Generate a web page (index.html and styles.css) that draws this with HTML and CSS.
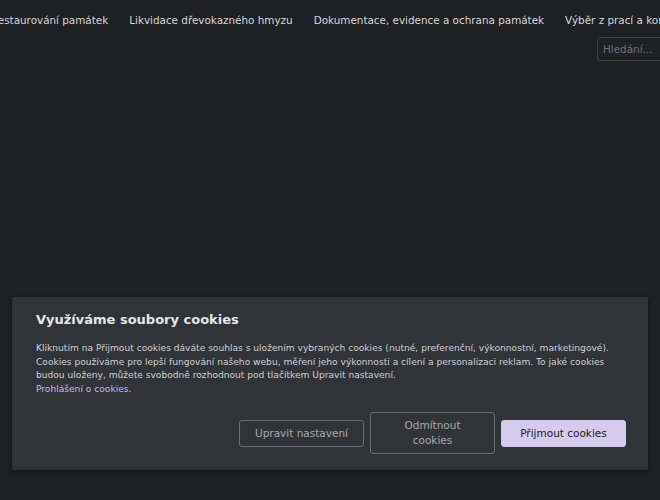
FILE: index.html
```html
<!DOCTYPE html>
<html lang="cs">
<head>
<meta charset="utf-8">
<link rel="stylesheet" href="styles.css">
</head>
<body>
<header class="top">
  <nav class="nav">
    <a class="nav-item">Restaurování památek</a>
    <a class="nav-item">Likvidace dřevokazného hmyzu</a>
    <a class="nav-item">Dokumentace, evidence a ochrana památek</a>
    <a class="nav-item">Výběr z prací a kontakty</a>
  </nav>
  <div class="search-row">
    <input class="search" type="text" placeholder="Hledání...">
  </div>
</header>
<div class="cookie">
  <h2 class="cookie-title">Využíváme soubory cookies</h2>
  <p class="cookie-text">Kliknutím na Přijmout cookies dáváte souhlas s uložením vybraných cookies (nutné, preferenční, výkonnostní, marketingové). Cookies používáme pro lepší fungování našeho webu, měření jeho výkonnosti a cílení a personalizaci reklam. To jaké cookies budou uloženy, můžete svobodně rozhodnout pod tlačítkem Upravit nastavení.<br><a class="cookie-link">Prohlášení o cookies.</a></p>
  <div class="cookie-actions">
    <button class="btn btn-outline">Upravit nastavení</button>
    <button class="btn btn-outline">Odmítnout cookies</button>
    <button class="btn btn-primary">Přijmout cookies</button>
  </div>
</div>
</body>
</html>
```
FILE: styles.css
```css
html, body {
  margin: 0;
  padding: 0;
  background: #1e2023;
  height: 100%;
  overflow: hidden;
  font-family: "DejaVu Sans", sans-serif;
}
.top {
  display: flex;
  flex-direction: column;
}
.nav {
  display: flex;
  gap: 21px;
  white-space: nowrap;
  margin-left: -9px;
  padding-top: 13px;
  font-size: 10.4px;
  line-height: 14px;
}
.nav-item {
  color: #d6d7d9;
}
.search-row {
  display: flex;
  justify-content: flex-end;
  margin-top: 10px;
  margin-right: -11px;
}
.search {
  width: 74px;
  height: 24px;
  box-sizing: border-box;
  background: #1e2023;
  border: 1px solid #3f4247;
  border-radius: 3px;
  padding: 0 5px;
  font-family: "DejaVu Sans", sans-serif;
  font-size: 10.4px;
  color: #d6d7d9;
}
.search::placeholder {
  color: #6f7277;
}
.cookie {
  position: absolute;
  left: 12px;
  right: 12px;
  top: 297px;
  height: 173px;
  box-sizing: border-box;
  background: #303338;
  border-radius: 2px;
  box-shadow: 0 2px 6px rgba(0,0,0,0.35);
  padding: 13px 22px 0 24px;
  color: #d6d7d9;
}
.cookie-title {
  margin: 0 0 12px;
  font-size: 13px;
  font-weight: bold;
  line-height: 20px;
  color: #e6e7e9;
}
.cookie-text {
  margin: 0;
  font-size: 9.1px;
  line-height: 13.5px;
  color: #d0d1d3;
}
.cookie-link {
  color: #c9bde6;
}
.cookie-actions {
  display: flex;
  justify-content: flex-end;
  align-items: center;
  gap: 6px;
  margin-top: 16px;
}
.btn {
  width: 125px;
  box-sizing: border-box;
  font-family: "DejaVu Sans", sans-serif;
  font-size: 10.5px;
  line-height: 15px;
  border-radius: 3px;
  padding: 5px 14px;
}
.btn-outline {
  background: transparent;
  border: 1px solid #6a6d72;
  color: #a7a9ad;
}
.btn-primary {
  background: #d6cbef;
  border: 1px solid #d6cbef;
  color: #1e2023;
}
```
